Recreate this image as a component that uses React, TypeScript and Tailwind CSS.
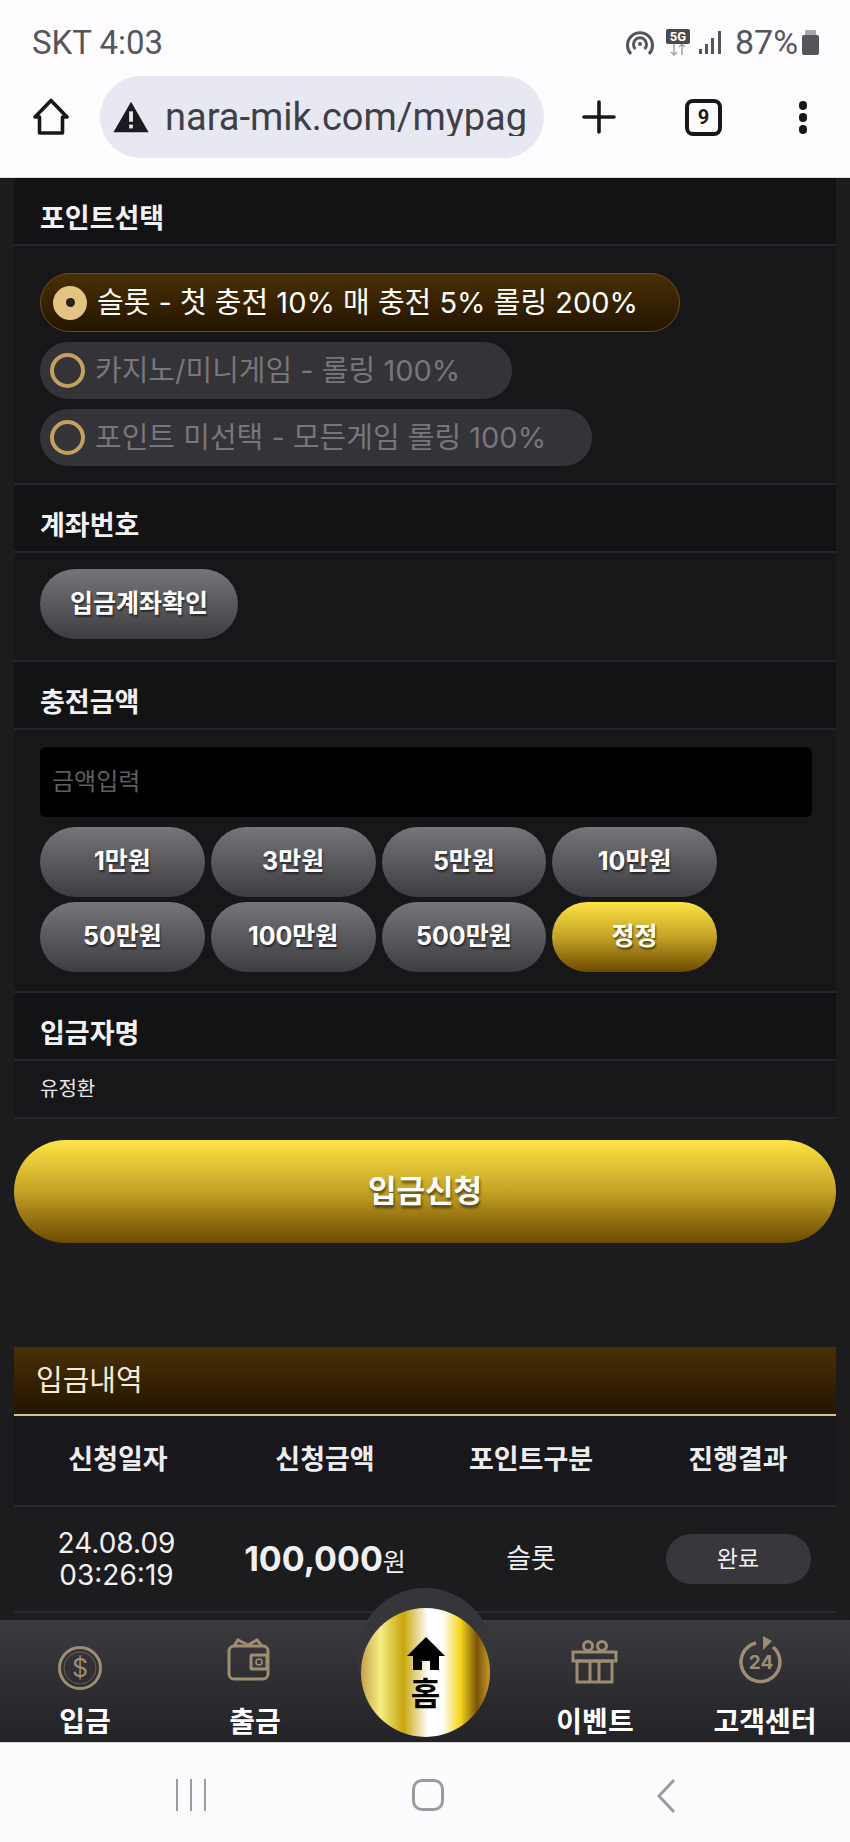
import React from 'react';

const HomeIcon = () => (
  <svg width="38" height="38" viewBox="0 0 38 38" fill="none" stroke="#18181b" strokeWidth="3.6" strokeLinejoin="round">
    <path d="M3 19 L19 2.5 L35 19 H30.5 V35 H7.5 V19 Z" />
  </svg>
);

const WarnIcon = () => (
  <svg width="38" height="34" viewBox="0 0 38 34">
    <path d="M19 1 L37.5 33 H0.5 Z" fill="#1c1c20" />
    <rect x="17" y="11" width="4" height="11" fill="#e8e8f1" />
    <rect x="17" y="25" width="4" height="4" fill="#e8e8f1" />
  </svg>
);

const StatusIcons = () => (
  <div className="flex items-center">
    <svg width="28" height="26" viewBox="0 0 28 26" fill="none" stroke="#55555a" strokeWidth="3">
      <path d="M5 25 A12.5 12.5 0 1 1 23 25" />
      <path d="M9.5 20 A6.5 6.5 0 1 1 18.5 20" />
      <circle cx="14" cy="15" r="2" fill="#55555a" stroke="none" />
    </svg>
    <div className="ml-[12px] flex w-[24px] flex-col items-center">
      <div className="flex h-[15px] w-[24px] items-center justify-center rounded-[2px] bg-[#4a4a4e] text-[13px] leading-none font-bold text-white">5G</div>
      <svg width="24" height="12" viewBox="0 0 24 12" fill="none" stroke="#a8a8ac" strokeWidth="1.6">
        <path d="M8 0 V11 M5 8 L8 11 L11 8" />
        <path d="M16 11 V0 M13 3 L16 0 L19 3" />
      </svg>
    </div>
    <svg className="ml-[9px]" width="23" height="23" viewBox="0 0 23 23" fill="#55555a">
      <rect x="0" y="18" width="3" height="5" />
      <rect x="6" y="13" width="3" height="10" />
      <rect x="12" y="7" width="3" height="16" />
      <rect x="19" y="0" width="3" height="23" />
    </svg>
    <span className="ml-[13px] w-[60px] text-[34px] leading-none whitespace-nowrap text-[#55555a]">87%</span>
    <svg className="ml-[7px]" width="17" height="25" viewBox="0 0 17 25" fill="#55555a">
      <rect x="3" y="0" width="11" height="6" rx="1" fill="#a8a8ac" />
      <rect x="0" y="5" width="17" height="20" rx="2" />
    </svg>
  </div>
);

const BrowserBar = () => (
  <div className="h-[178px] shrink-0 border-b border-[#dddde0] bg-[#fefcff] font-['Roboto','Noto_Sans_CJK_KR',sans-serif]">
    <div className="flex h-[76px] items-center justify-between pt-[8px] pr-[31px] pl-[32px]">
      <span className="text-[33px] leading-none text-[#55555a]">SKT 4:03</span>
      <StatusIcons />
    </div>
    <div className="flex items-center">
      <div className="ml-[32px] w-[38px]">
        <HomeIcon />
      </div>
      <div className="ml-[30px] flex h-[82px] w-[444px] items-center overflow-hidden rounded-[41px] bg-[#e8e8f2] pr-[16px] pl-[13px]">
        <WarnIcon />
        <span className="ml-[16px] overflow-hidden text-[38px] leading-none whitespace-nowrap text-[#3f3f48]">nara-mik.com/mypage</span>
      </div>
      <svg className="ml-[38px]" width="34" height="34" viewBox="0 0 34 34" stroke="#18181b" strokeWidth="3.6" strokeLinecap="round">
        <path d="M17 2 V32 M2 17 H32" />
      </svg>
      <div className="ml-[69px] flex h-[37px] w-[37px] items-center justify-center rounded-[8px] border-[4px] border-[#18181b] text-[20px] font-bold text-[#18181b]">9</div>
      <div className="ml-[77px] flex flex-col gap-[3px]">
        <span className="h-[9px] w-[8px] rounded-full bg-[#18181b]" />
        <span className="h-[9px] w-[8px] rounded-full bg-[#18181b]" />
        <span className="h-[9px] w-[8px] rounded-full bg-[#18181b]" />
      </div>
    </div>
  </div>
);

const SectionHead = ({ title }: { title: string }) => (
  <div className="flex h-[68px] items-center border-b-2 border-[#26262a] bg-[#131316] pt-[14px] pl-[26px] text-[27px] leading-none font-bold text-[#f2f2f4]">
    {title}
  </div>
);

const GrayBtn = ({ label, className }: { label: string; className?: string }) => (
  <button className={`flex h-[70px] items-center justify-center rounded-[35px] bg-gradient-to-b from-[#76757a] to-[#3e3d41] text-[25px] font-bold text-white [text-shadow:1px_2px_2px_rgba(0,0,0,0.55)] ${className ?? ''}`}>
    {label}
  </button>
);

const RadioRow = ({ label, className }: { label: string; className: string }) => (
  <div className={`flex h-[57px] items-center rounded-[28px] bg-[#343337] pl-[10px] ${className}`}>
    <span className="h-[35px] w-[35px] shrink-0 rounded-full border-[4px] border-[#c2a05e]" />
    <span className="ml-[10px] text-[29px] leading-none whitespace-nowrap text-[#77767b]">{label}</span>
  </div>
);

const AmountGrid = () => {
  const amounts = ['1만원', '3만원', '5만원', '10만원', '50만원', '100만원', '500만원'];
  return (
    <div className="mt-[10px] grid w-[677px] grid-cols-4 gap-x-[6px] gap-y-[5px]">
      {amounts.map((a) => (
        <GrayBtn key={a} label={a} />
      ))}
      <button className="flex h-[70px] items-center justify-center rounded-[35px] bg-gradient-to-b from-[#fde445] via-[#c4a326] to-[#6e4a00] text-[25px] font-bold text-white [text-shadow:1px_2px_2px_rgba(0,0,0,0.55)]">
        정정
      </button>
    </div>
  );
};

const DepositForm = () => (
  <div>
    <SectionHead title="포인트선택" />
    <div className="flex h-[239px] flex-col gap-[10px] border-b-2 border-[#26262a] bg-[#17171a] pt-[27px] pl-[26px]">
      <div className="flex h-[59px] w-[640px] items-center rounded-[30px] border border-[#6b4f14] bg-gradient-to-b from-[#4a2f05] to-[#241500] pl-[12px]">
        <span className="flex h-[34px] w-[34px] shrink-0 items-center justify-center rounded-full bg-[#e3c483]">
          <span className="h-[9px] w-[9px] rounded-full bg-[#2a2014]" />
        </span>
        <span className="ml-[10px] text-[29px] leading-none whitespace-nowrap text-white">슬롯 - 첫 충전 10% 매 충전 5% 롤링 200%</span>
      </div>
      <RadioRow label="카지노/미니게임 - 롤링 100%" className="w-[472px]" />
      <RadioRow label="포인트 미선택 - 모든게임 롤링 100%" className="w-[552px]" />
    </div>
    <SectionHead title="계좌번호" />
    <div className="h-[109px] border-b-2 border-[#26262a] bg-[#17171a] pt-[16px] pl-[26px]">
      <GrayBtn label="입금계좌확인" className="w-[198px]" />
    </div>
    <SectionHead title="충전금액" />
    <div className="h-[263px] border-b-2 border-[#26262a] bg-[#17171a] pt-[17px] pl-[26px]">
      <div className="flex h-[70px] w-[772px] items-center rounded-[6px] bg-black pl-[12px] text-[24px] text-[#5f5f63]">금액입력</div>
      <AmountGrid />
    </div>
    <SectionHead title="입금자명" />
    <div className="flex h-[58px] items-center border-b-2 border-[#26262a] bg-[#17171a] pl-[26px] text-[20px] text-[#e8e8ea]">유정환</div>
    <button className="mt-[21px] flex h-[103px] w-full items-center justify-center rounded-[52px] bg-gradient-to-b from-[#fde445] via-[#c4a326] to-[#6e4a00] text-[31px] font-bold text-white [text-shadow:1px_3px_3px_rgba(0,0,0,0.55)]">
      입금신청
    </button>
  </div>
);

const History = () => (
  <div className="mt-[104px]">
    <div className="flex h-[69px] items-center border-b-2 border-[#d8c57e] bg-gradient-to-b from-[#4a3006] to-[#241500] pl-[22px] text-[29px] leading-none text-[#f4ecd8]">
      입금내역
    </div>
    <div className="grid h-[91px] grid-cols-[208px_206px_206px_202px] items-center border-b-2 border-[#2a2a2e] bg-[#18181c] text-center text-[27px] font-bold text-[#ececee]">
      <span>신청일자</span>
      <span>신청금액</span>
      <span>포인트구분</span>
      <span className="pl-[6px]">진행결과</span>
    </div>
    <div className="grid h-[106px] grid-cols-[208px_206px_206px_202px] items-center border-b-2 border-[#2a2a2e] text-center text-[#f0f0f2]">
      <div className="pr-[3px] text-[28px] leading-[32px]">
        24.08.09
        <br />
        03:26:19
      </div>
      <div className="font-bold whitespace-nowrap">
        <span className="text-[34px] leading-none">100,000</span>
        <span className="text-[25px] leading-none font-normal">원</span>
      </div>
      <div className="text-[27px]">슬롯</div>
      <div className="flex justify-center pl-[6px]">
        <span className="flex h-[50px] w-[145px] items-center justify-center rounded-[25px] bg-[#38373b] text-[23px]">완료</span>
      </div>
    </div>
  </div>
);

const NavIcon = ({ children }: { children: React.ReactNode }) => (
  <svg width="60" height="74" viewBox="0 0 60 74" fill="none" stroke="#9c8d73" strokeWidth="3">
    {children}
  </svg>
);

const NavItem = ({ label, children }: { label: string; children: React.ReactNode }) => (
  <div className="flex w-[170px] flex-col items-center">
    <div className="flex h-[74px] items-center">{children}</div>
    <span className="mt-[8px] text-[28px] leading-none font-bold whitespace-nowrap text-white">{label}</span>
  </div>
);

const BottomNav = () => (
  <div className="relative flex h-[122px] shrink-0 items-start bg-gradient-to-b from-[#3b3a3e] to-[#232226] pt-[6px]">
    <NavItem label="입금">
      <NavIcon>
        <circle cx="25" cy="42" r="20.5" />
        <circle cx="25" cy="42" r="16" strokeWidth="1" opacity="0.5" />
        <text x="25" y="51" textAnchor="middle" fontSize="25" fill="#9c8d73" stroke="none">$</text>
      </NavIcon>
    </NavItem>
    <NavItem label="출금">
      <NavIcon>
        <rect x="4" y="20" width="39" height="33" rx="5" />
        <path d="M9 20 L13 14 L23 19 L32 14 L37 20" />
        <rect x="26" y="29" width="16" height="14" rx="1" fill="#3a393c" />
        <circle cx="34" cy="36" r="3" strokeWidth="1.6" />
      </NavIcon>
    </NavItem>
    <div className="w-[170px]" />
    <NavItem label="이벤트">
      <NavIcon>
        <circle cx="23" cy="20" r="4.5" />
        <circle cx="37" cy="20" r="4.5" />
        <rect x="8" y="26" width="43" height="9" />
        <rect x="12" y="35" width="35" height="21" />
        <path d="M25 35 V56 M34 35 V56" />
      </NavIcon>
    </NavItem>
    <NavItem label="고객센터">
      <NavIcon>
        <path d="M21 17 A19.5 19.5 0 1 0 38 21" strokeWidth="3.5" />
        <path d="M28 10 L37 15 L28 24 Z" fill="#9c8d73" stroke="none" />
        <text x="26" y="43" textAnchor="middle" fontSize="19" fontWeight="700" fill="#9c8d73" stroke="none">24</text>
      </NavIcon>
    </NavItem>
    <div className="absolute top-[-32px] left-[357px] h-[136px] w-[136px] rounded-full bg-[#36353a]" />
    <div className="absolute top-[-12px] left-[361px] flex h-[129px] w-[129px] flex-col items-center rounded-full bg-[linear-gradient(90deg,#c9a14a_0%,#f4ee84_15%,#c9a60e_33%,#ffffff_52%,#ffffff_63%,#f5d61a_77%,#7b5308_90%,#c79a2a_100%)] pt-[29px]">
      <svg width="38" height="33" viewBox="0 0 38 33" fill="#000">
        <path d="M19 0 L38 19 H32 V33 H23 V24 H15 V33 H6 V19 H0 Z" />
      </svg>
      <span className="mt-[7px] text-[32px] leading-[34px] font-bold text-black">홈</span>
    </div>
  </div>
);

const AndroidNav = () => (
  <div className="flex h-[100px] shrink-0 items-start border-t border-[#d8d8da] bg-[#fefbfe] pt-[36px]">
    <div className="ml-[176px] flex h-[32px] gap-[12px]">
      <span className="w-[2px] bg-[#9b9b9f]" />
      <span className="w-[2px] bg-[#9b9b9f]" />
      <span className="w-[2px] bg-[#9b9b9f]" />
    </div>
    <div className="ml-[206px] h-[32px] w-[32px] rounded-[10px] border-[3px] border-[#9b9b9f]" />
    <svg className="ml-[212px]" width="20" height="34" viewBox="0 0 20 34" fill="none" stroke="#9b9b9f" strokeWidth="3">
      <path d="M18 1 L3 17 L18 33" />
    </svg>
  </div>
);

export default function App() {
  return (
    <div className="flex h-[1842px] w-[850px] flex-col overflow-hidden bg-[#1c1c1e] font-['Inter','Noto_Sans_CJK_KR',sans-serif]">
      <BrowserBar />
      <div className="min-h-0 flex-1 overflow-hidden px-[14px]">
        <DepositForm />
        <History />
      </div>
      <BottomNav />
      <AndroidNav />
    </div>
  );
}
